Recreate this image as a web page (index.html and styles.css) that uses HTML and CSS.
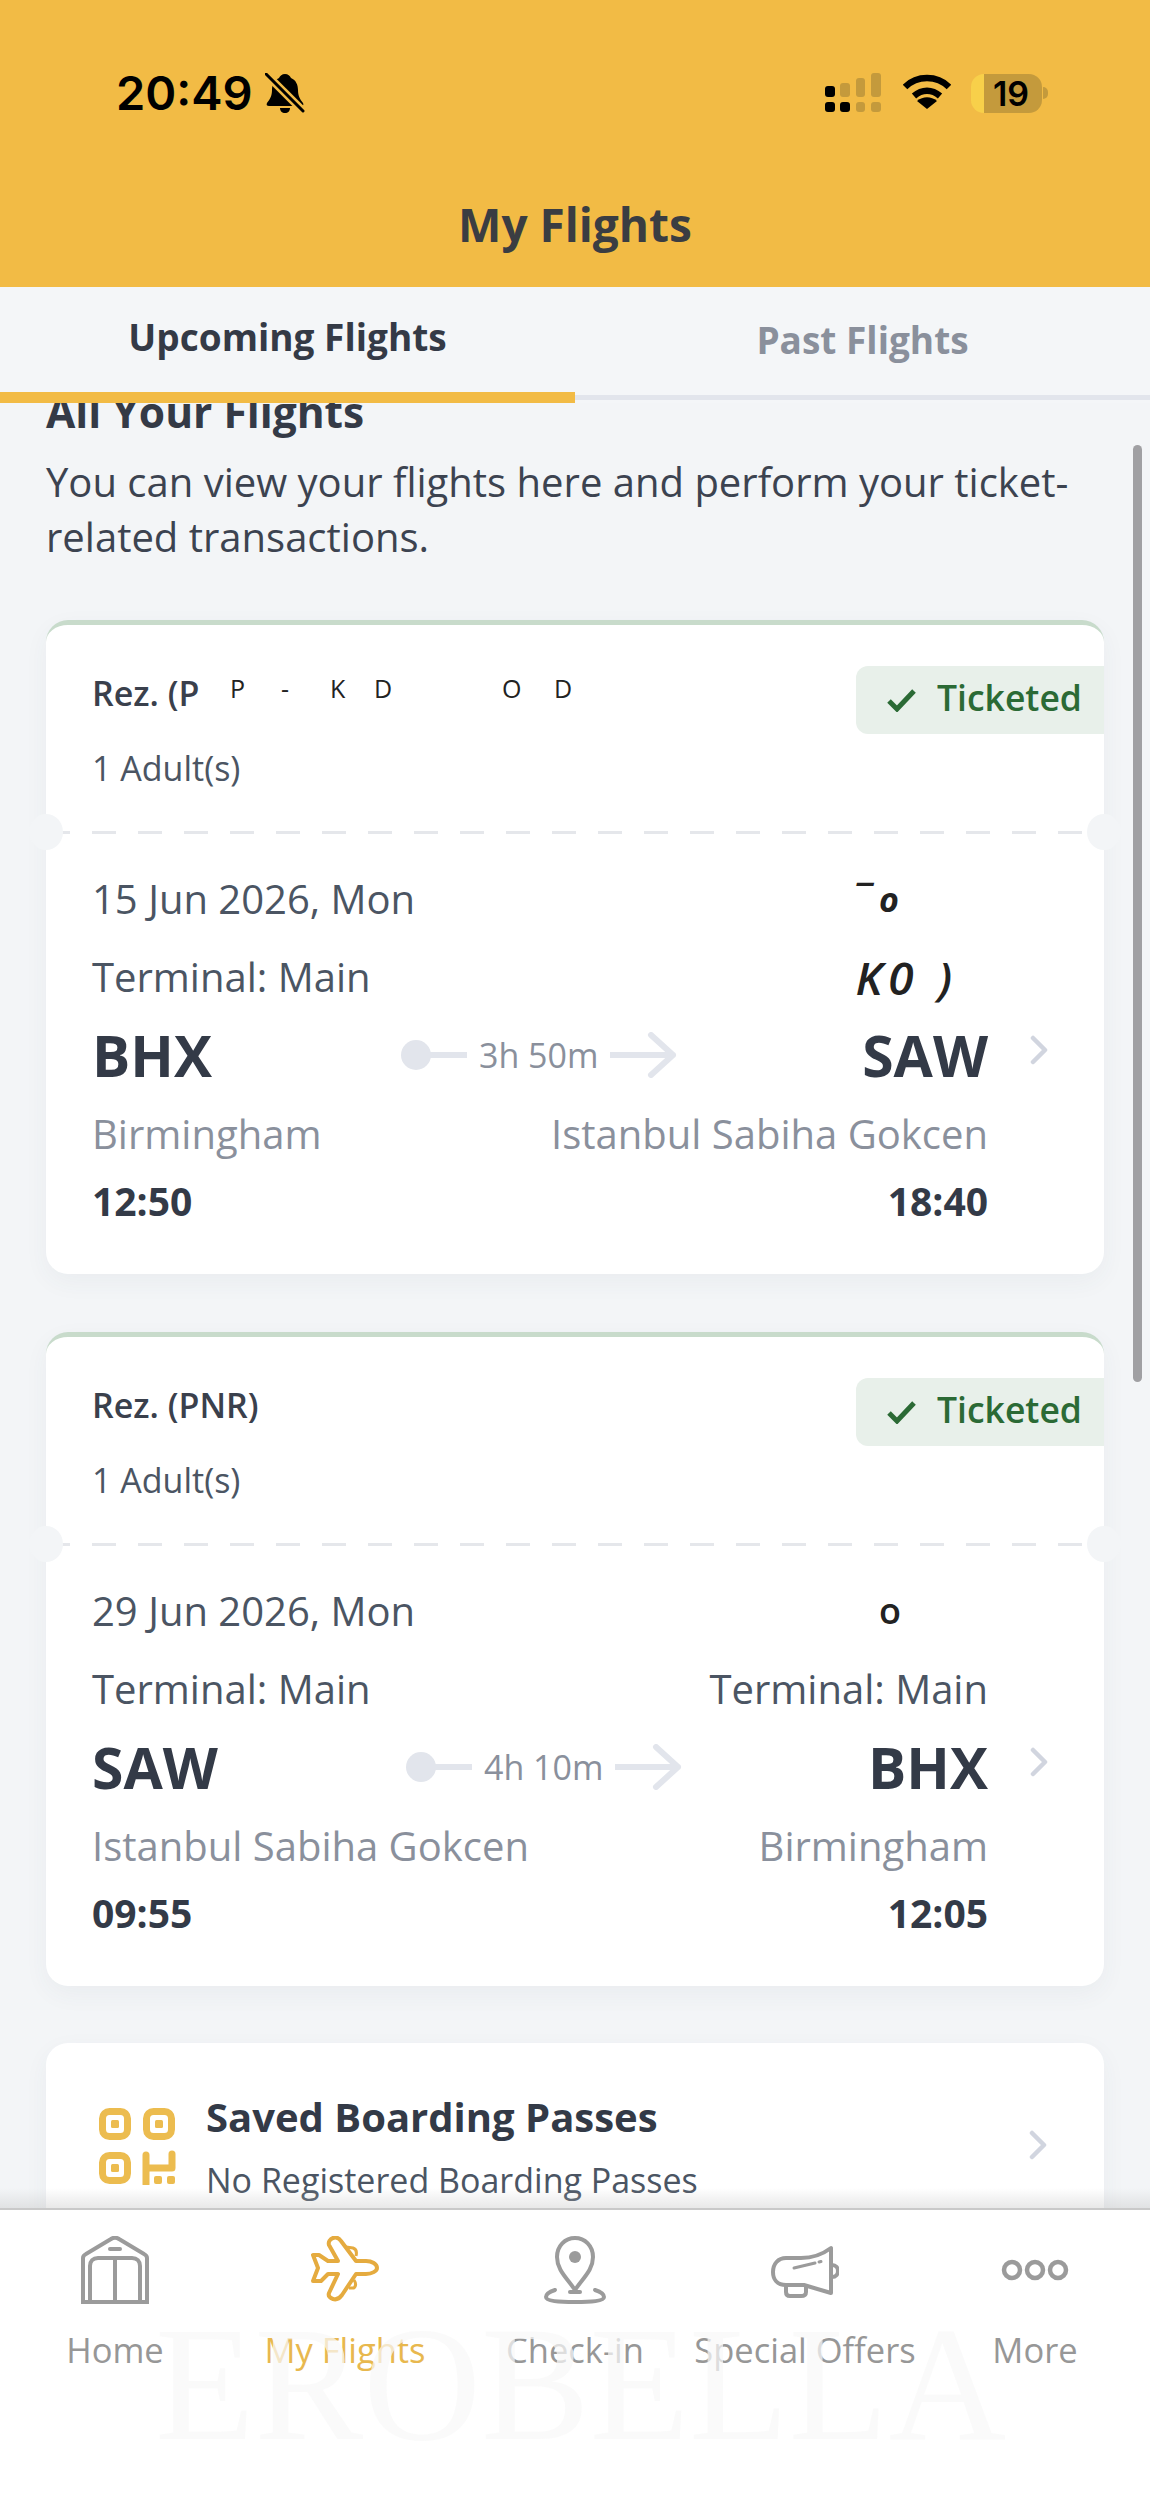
FILE: index.html
```html
<!DOCTYPE html>
<html lang="en">
<head>
	<meta charset="UTF-8">
	<title>My Flights</title>
	<link rel="stylesheet" href="styles.css">
</head>
<body>
<div class="phone">
	<div class="header">
		<div class="status">
			<div class="status-left">
				<span class="clock">20:49</span>
				<svg class="bell" width="40" height="40" viewBox="0 0 40 40">
					<path d="M20 1c3 0 5 2 6 4 5 2 7 7 7 12 0 6 2 9 5 13 1 2 0 3-2 3H4c-2 0-3-1-2-3 3-4 5-7 5-13 0-5 2-10 7-12 1-2 3-4 6-4z" fill="#000"/>
					<path d="M15 35h10c0 3-2 5-5 5s-5-2-5-5z" fill="#000"/>
					<path d="M3 3l35 35" stroke="#f2bb45" stroke-width="8"/>
					<path d="M1 1l37 37" stroke="#000" stroke-width="3" stroke-linecap="round"/>
				</svg>
			</div>
			<div class="status-right">
				<svg width="58" height="40" viewBox="0 0 58 40">
					<rect x="0" y="13" width="10" height="11" rx="3" fill="#000"/>
					<rect x="15" y="10" width="10" height="14" rx="3" fill="#c49a3c"/>
					<rect x="31" y="5" width="9" height="19" rx="3" fill="#c49a3c"/>
					<rect x="46" y="0" width="10" height="24" rx="3" fill="#c49a3c"/>
					<rect x="0" y="29" width="10" height="10" rx="3" fill="#000"/>
					<rect x="15" y="29" width="10" height="10" rx="3" fill="#000"/>
					<rect x="31" y="29" width="9" height="10" rx="3" fill="#c49a3c"/>
					<rect x="46" y="29" width="10" height="10" rx="3" fill="#c49a3c"/>
				</svg>
				<svg class="wifi" width="48" height="36" viewBox="0 0 48 36">
					<path d="M2 14C14 2 34 2 46 14" fill="none" stroke="#000" stroke-width="6.500"/>
					<path d="M11 23c8-7 18-7 26 0" fill="none" stroke="#000" stroke-width="6.500"/>
					<path d="M14 28c6-5 14-5 20 0L24 36z" fill="#000"/>
				</svg>
				<div class="battery">
					<div class="battery-cell">
						<span class="battery-num">19</span>
					</div>
					<div class="battery-nub"></div>
				</div>
			</div>
		</div>
		<div class="title">My Flights</div>
	</div>

	<div class="tabs">
		<div class="tab tab-on">Upcoming Flights</div>
		<div class="tab">Past Flights</div>
	</div>

	<div class="content">
		<div class="scrollbar"></div>
		<h2 class="intro-title">All Your Flights</h2>
		<p class="intro-text">You can view your flights here and perform your ticket-related transactions.</p>

		<div class="card">
			<div class="card-top">
				<div class="rez">Rez. (P<span class="blot blot-a">P</span><span class="blot blot-b">-</span><span class="blot blot-c">K</span><span class="blot blot-d">D</span><span class="blot blot-e">O</span><span class="blot blot-f">D</span></div>
				<div class="adults">1 Adult(s)</div>
				<div class="badge">
					<svg width="31" height="24" viewBox="0 0 31 24"><path d="M3 13l8 8L28 3" fill="none" stroke="#2b6a35" stroke-width="5"/></svg>
					<span>Ticketed</span>
				</div>
			</div>
			<div class="tear"></div>
			<div class="card-body">
				<div class="row row-date">
					<span>15 Jun 2026, Mon</span>
					<span class="blot-right">¯ o</span>
				</div>
				<div class="row row-term">
					<span>Terminal: Main</span>
					<span class="blot-right blot-term">K0 )</span>
				</div>
				<div class="row row-code">
					<span class="code">BHX</span>
					<div class="route">
						<span class="route-dot"></span><span class="route-line"></span>
						<span class="route-time">3h 50m</span>
						<svg width="67" height="46" viewBox="0 0 67 46"><path d="M1 23h62M41 3l22 20-22 20" fill="none" stroke="#e2e5ec" stroke-width="6" stroke-linecap="round" stroke-linejoin="round"/></svg>
					</div>
					<span class="code">SAW</span>
				</div>
				<div class="row row-city">
					<span>Birmingham</span>
					<span>Istanbul Sabiha Gokcen</span>
				</div>
				<div class="row row-time">
					<span>12:50</span>
					<span>18:40</span>
				</div>
				<svg class="chev chev-card" width="18" height="30" viewBox="0 0 18 30"><path d="M3 3l12 12L3 27" fill="none" stroke="#d1d5df" stroke-width="4.500" stroke-linecap="round" stroke-linejoin="round"/></svg>
			</div>
		</div>

		<div class="card">
			<div class="card-top">
				<div class="rez">Rez. (PNR)</div>
				<div class="adults">1 Adult(s)</div>
				<div class="badge">
					<svg width="31" height="24" viewBox="0 0 31 24"><path d="M3 13l8 8L28 3" fill="none" stroke="#2b6a35" stroke-width="5"/></svg>
					<span>Ticketed</span>
				</div>
			</div>
			<div class="tear"></div>
			<div class="card-body">
				<div class="row row-date">
					<span>29 Jun 2026, Mon</span>
					<span class="blot-right blot-second">o</span>
				</div>
				<div class="row row-term">
					<span>Terminal: Main</span>
					<span>Terminal: Main</span>
				</div>
				<div class="row row-code">
					<span class="code">SAW</span>
					<div class="route route-second">
						<span class="route-dot"></span><span class="route-line"></span>
						<span class="route-time">4h 10m</span>
						<svg width="67" height="46" viewBox="0 0 67 46"><path d="M1 23h62M41 3l22 20-22 20" fill="none" stroke="#e2e5ec" stroke-width="6" stroke-linecap="round" stroke-linejoin="round"/></svg>
					</div>
					<span class="code">BHX</span>
				</div>
				<div class="row row-city">
					<span>Istanbul Sabiha Gokcen</span>
					<span>Birmingham</span>
				</div>
				<div class="row row-time">
					<span>09:55</span>
					<span>12:05</span>
				</div>
				<svg class="chev chev-card" width="18" height="30" viewBox="0 0 18 30"><path d="M3 3l12 12L3 27" fill="none" stroke="#d1d5df" stroke-width="4.500" stroke-linecap="round" stroke-linejoin="round"/></svg>
			</div>
		</div>

		<div class="card card-saved">
			<svg width="77" height="77" viewBox="0 0 77 77" fill="none" stroke="#ecbc4f" stroke-width="7">
				<rect x="3.500" y="3.500" width="25" height="25" rx="7"/>
				<rect x="47.500" y="3.500" width="25" height="25" rx="7"/>
				<rect x="3.500" y="47.500" width="25" height="25" rx="7"/>
				<rect x="12" y="12" width="8" height="8" rx="1.500" fill="#ecbc4f" stroke="none"/>
				<rect x="56" y="12" width="8" height="8" rx="1.500" fill="#ecbc4f" stroke="none"/>
				<rect x="12" y="56" width="8" height="8" rx="1.500" fill="#ecbc4f" stroke="none"/>
				<path d="M47 47v29M47 60h26V46" stroke-linecap="round" stroke-linejoin="round"/>
				<rect x="55" y="68" width="8" height="8" rx="2" fill="#ecbc4f" stroke="none"/>
				<rect x="68" y="68" width="8" height="8" rx="2" fill="#ecbc4f" stroke="none"/>
			</svg>
			<div class="saved-text">
				<div class="saved-title">Saved Boarding Passes</div>
				<div class="saved-sub">No Registered Boarding Passes</div>
			</div>
			<svg class="chev" width="18" height="30" viewBox="0 0 18 30"><path d="M3 3l12 12L3 27" fill="none" stroke="#d1d5df" stroke-width="4.500" stroke-linecap="round" stroke-linejoin="round"/></svg>
		</div>
		<div class="nav-shade"></div>
	</div>

	<div class="nav">
		<div class="nav-item">
			<svg width="68" height="68" viewBox="0 0 68 68" fill="none" stroke="#9b9b9b" stroke-width="4">
				<path d="M2 66V22c0-2 1-3 3-4L30 3c3-2 5-2 8 0l25 15c2 1 3 2 3 4v44z"/>
				<path d="M9 66V30c0-5 3-8 8-8h34c5 0 8 3 8 8v36M34 22v44"/>
				<path d="M29 13h10" stroke-linecap="round"/>
			</svg>
			<span>Home</span>
		</div>
		<div class="nav-item nav-on">
			<svg width="68" height="68" viewBox="0 0 68 68" fill="none" stroke="#e5ab3f" stroke-width="4" stroke-linejoin="round">
				<path d="M55 25C61 25 66 28 66 32C66 35 61 38 55 38H45L31 59C28 63 25 64 22 63C19 62 17 60 18 57L27 38H17L10 45H2L7 32L2 19H8L17 25H27L18 9C17 6 19 3 22 2C25 1 28 2 30 5L45 25Z"/>
				<path d="M35 11L42 12C45 13 46 16 45 20M38 52L43 52C45 50 45 47 43 44" stroke-width="3"/>
			</svg>
			<span>My Flights</span>
		</div>
		<div class="nav-item">
			<svg width="68" height="68" viewBox="0 0 68 68" fill="none" stroke="#9b9b9b" stroke-width="4">
				<path d="M34 54C26 42 16 34 16 21 16 10 24 2 34 2s18 8 18 19c0 13-10 21-18 33z"/>
				<circle cx="34" cy="21" r="6" fill="#9b9b9b" stroke="none"/>
				<path d="M14 54c-6 2-9 4-9 7 0 4 13 5 29 5s29-1 29-5c0-3-3-5-9-7" stroke-linecap="round"/>
				<path d="M29 56h10" stroke-linecap="round"/>
			</svg>
			<span>Check-in</span>
		</div>
		<div class="nav-item">
			<svg width="68" height="68" viewBox="0 0 68 68" fill="none" stroke="#9b9b9b" stroke-width="4" stroke-linejoin="round">
				<path d="M60 12V57L33 49H15C6 49 2 43 2 36C2 28 7 22 15 22H30C42 22 52 18 60 12Z"/>
				<path d="M15 50V56C15 59 17 60 19 60H30C33 60 35 59 35 56V50"/>
				<path d="M61 29C65 29 67 32 67 35C67 38 65 41 61 41"/>
				<path d="M23 32L44 27M48 26L50 25.500" stroke-width="3" stroke-linecap="round"/>
			</svg>
			<span>Special Offers</span>
		</div>
		<div class="nav-item">
			<svg width="68" height="68" viewBox="0 0 68 68" fill="none" stroke="#9b9b9b" stroke-width="4.500">
				<circle cx="11" cy="34" r="8"/>
				<circle cx="34" cy="34" r="8"/>
				<circle cx="57" cy="34" r="8"/>
			</svg>
			<span>More</span>
		</div>
		<div class="watermark">EROBELLA</div>
	</div>
</div>
</body>
</html>
```

FILE: styles.css
```css
*{margin:0;padding:0;box-sizing:border-box}
body{font-family:"Open Sans","Noto Sans",sans-serif;background:#fff}
.phone{width:1150px;height:2500px;display:flex;flex-direction:column;overflow:hidden;background:#f3f5f7}

/* top bar */
.header{height:287px;background:#f2bb45;flex:none}
.status{display:flex;justify-content:space-between;align-items:center;height:40px;margin-top:0;padding:73px 102px 0 116px;box-sizing:content-box}
.status-left{display:flex;align-items:center;gap:12px}
.clock{font-family:Inter,"Liberation Sans",sans-serif;font-size:47px;font-weight:600;line-height:40px;color:#000}
.status-right{display:flex;align-items:center;gap:20px}
.wifi{margin-top:-4px}
.battery{display:flex;align-items:center;gap:1px}
.battery-cell{width:71px;height:39px;border-radius:13px;background:linear-gradient(90deg,#f8d04a 0,#f8d04a 13px,#c49a3c 13px);display:flex;align-items:center;justify-content:center;padding-left:9px}
.battery-num{font-family:Inter,"Liberation Sans",sans-serif;font-size:34px;font-weight:600;line-height:39px;color:#000}
.battery-nub{width:5px;height:12px;background:#c49a3c;border-radius:0 6px 6px 0}
.title{font-size:46px;font-weight:700;color:#3a3d42;text-align:center;line-height:60px;margin-top:81px}

/* tabs */
.tabs{display:flex;height:116px;flex:none;background:#f4f6f8;position:relative;z-index:2}
.tab{width:50%;font-size:37px;font-weight:700;color:#8a909c;text-align:center;padding-top:28px;border-bottom:3px solid #f4f6f8;position:relative;line-height:50px}
.tab:after{content:"";position:absolute;left:0;right:0;bottom:0;height:5px;background:#e2e5ec}
.tab-on{color:#343a46;padding-top:25px;border-bottom:0}
.tab-on:after{height:11px;background:#f2bb45}

/* scrolling part */
.content{flex:1;position:relative;overflow:hidden;padding:0 46px}
.scrollbar{position:absolute;right:8px;top:42px;width:9px;height:937px;border-radius:5px;background:#a0a0a3}
.intro-title{font-size:42.500px;font-weight:700;color:#343a46;line-height:54px;margin-top:-18px}
.intro-text{font-size:40px;color:#3c4350;line-height:55px;margin-top:15px;width:1040px}

.card{background:#fff;border-radius:22px;margin-top:58px;position:relative;height:654px;box-shadow:0 8px 24px rgba(60,70,90,.05);border-top:5px solid #c8dbcb}
.intro-text + .card{margin-top:56px}
.card-top{height:206px;padding:48px 46px 0;position:relative}
.rez{font-size:34px;font-weight:600;color:#3a404c;line-height:40px;position:relative;height:40px}
.adults{font-size:34px;color:#4b5563;line-height:40px;margin-top:35px}
.blot{position:absolute;top:-5px;font-size:25px;font-weight:400;color:#222}
.blot-a{left:138px}.blot-b{left:189px}.blot-c{left:238px}.blot-d{left:282px}.blot-e{left:410px}.blot-f{left:462px}
.badge{position:absolute;right:0;top:41px;width:248px;height:68px;background:#e8f0ea;border-radius:12px 0 0 12px;display:flex;align-items:center;gap:20px;padding:0 0 6px 30px;font-size:35.500px;font-weight:600;color:#2b6a35;white-space:nowrap}
.badge svg{margin-top:6px}
.tear{height:3px;background:repeating-linear-gradient(90deg,#e5e7eb 0,#e5e7eb 24px,#fff 24px,#fff 46px);position:relative}
.tear:before,.tear:after{content:"";position:absolute;top:-17px;width:34px;height:36px;border-radius:50%;background:#f3f5f7}
.tear:before{left:-17px}
.tear:after{right:-17px}
.card-body{padding:40px 116px 0 46px;position:relative}
.row{display:flex;justify-content:space-between;align-items:center;position:relative}
.row-date,.row-term{font-size:40px;color:#4b5563;line-height:50px}
.row-term{margin-top:28px}
.row-code{margin-top:23px;height:60px}
.code{font-size:57px;font-weight:700;color:#333a47;line-height:60px;width:170px}
.code:last-child{text-align:right}
.row-city{font-size:40px;color:#8a909c;line-height:50px;margin-top:24px}
.row-time{font-size:39px;font-weight:700;color:#333a47;line-height:50px;margin-top:17px}
.route{position:absolute;left:309px;top:0;height:60px;display:flex;align-items:center}
.route-second{left:314px}
.route-dot{width:30px;height:30px;border-radius:50%;background:#e2e5ec}
.route-line{width:37px;height:6px;background:#e2e5ec;margin-left:-1px}
.route-time{font-size:34px;color:#8a909c;margin:0 12px}
.blot-right{font-size:34px;font-style:italic;font-weight:700;color:#222;margin-right:89px;line-height:50px}
.blot-term{font-size:46px;font-weight:600;letter-spacing:6px;margin-right:30px}
.blot-second{font-style:normal;font-weight:600;font-size:36px;margin-right:87px}
.chev{flex:none}
.chev-card{position:absolute;right:56px;top:201px}

.card-saved{border-top:0;height:190px;margin-top:57px;display:flex;align-items:flex-start;padding:65px 57px 0 53px}
.saved-text{margin-left:30px;flex:1;margin-top:-16px}
.saved-title{font-size:40px;font-weight:700;color:#333a47;line-height:50px}
.saved-sub{font-size:34px;color:#4b5563;line-height:44px;margin-top:16px}
.card-saved .chev{margin-top:22px}
.nav-shade{position:absolute;left:0;right:0;bottom:0;height:20px;background:linear-gradient(rgba(190,190,190,0),rgba(190,190,190,.35))}

/* bottom nav */
.nav{height:292px;flex:none;background:#fff;border-top:2px solid #c9c9c9;display:flex;position:relative;padding:26px 0 0 0}
.nav-item{flex:1;display:flex;flex-direction:column;align-items:center;font-size:34.500px;color:#979797;line-height:46px;gap:23px;white-space:nowrap}
.nav-item svg{height:68px}
.nav-on{color:#e8b84e}
.watermark{position:absolute;left:155px;top:104px;font-family:"Liberation Serif",serif;font-size:163px;line-height:140px;color:rgba(248,248,248,.72);white-space:nowrap}
```
